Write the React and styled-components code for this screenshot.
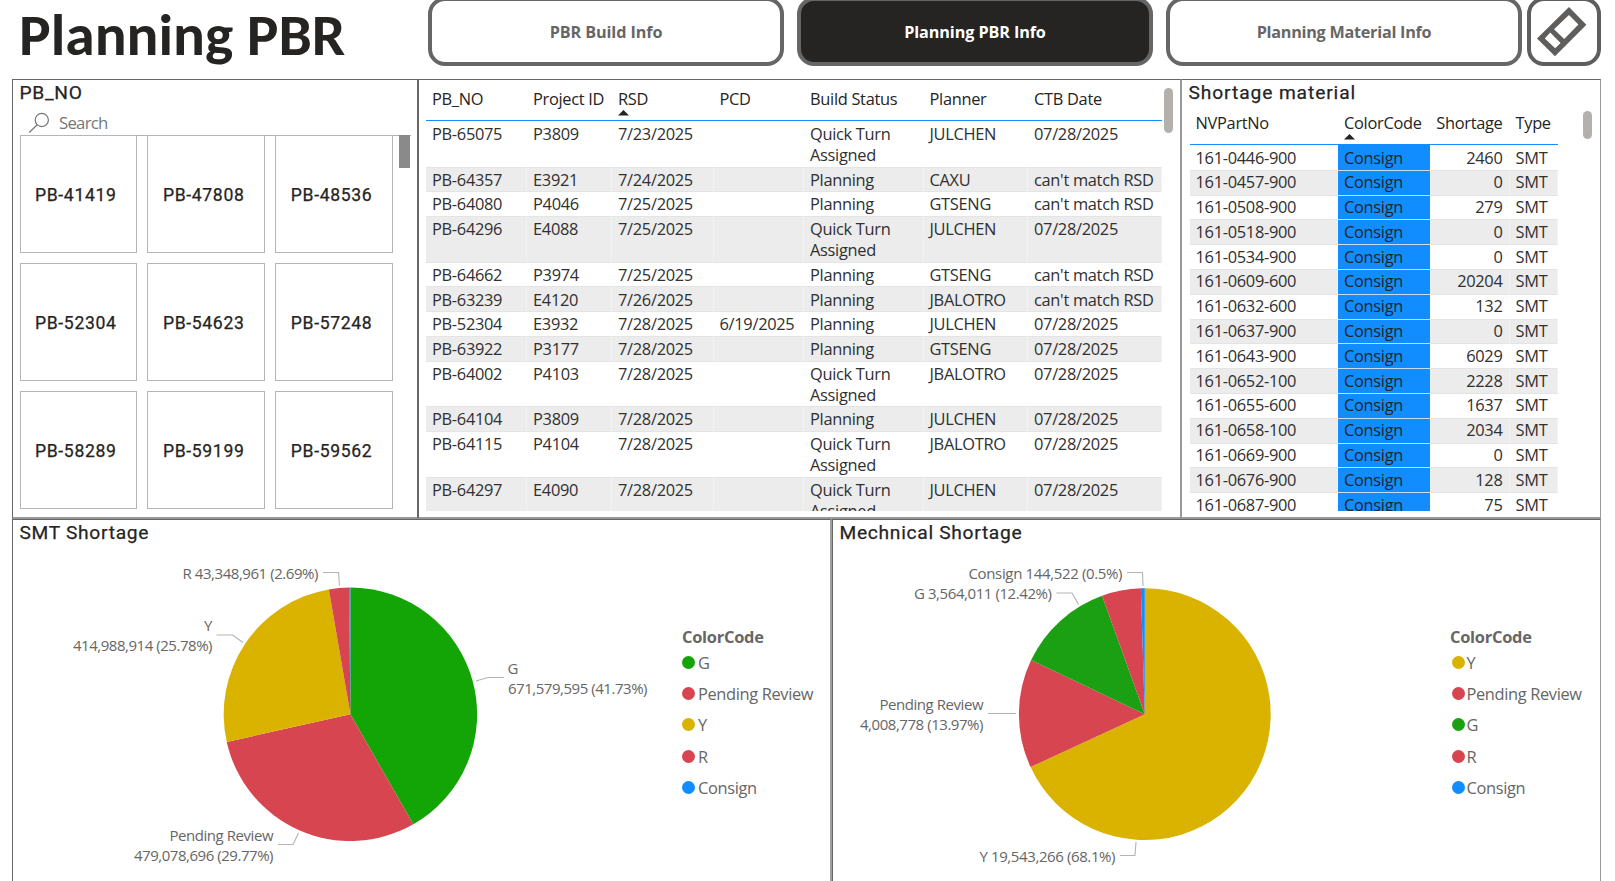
import React from "react";
import styled, { createGlobalStyle } from "styled-components";

const GlobalStyle = createGlobalStyle`
  *, *::before, *::after { box-sizing: border-box; }
  html, body { margin: 0; background: #fff; overflow: hidden; }
  body { font-family: "Open Sans", "Noto Sans", sans-serif; color: #252423; }
`;

const Page = styled.div`
  width: 1615px;
  height: 881px;
  padding-left: 12px;
  overflow: hidden;
  display: flex;
  flex-direction: column;
`;

const Header = styled.header`
  height: 79px;
  flex: none;
  display: flex;
  align-items: flex-start;
`;

const PageTitle = styled.h1`
  width: 416px;
  margin: 0;
  padding-left: 7px;
  font: bold 59.5px/70px Calibri, Carlito, Lato, sans-serif;
  white-space: nowrap;
`;

const NavButton = styled.button`
  width: ${(p) => p.$width || 356}px;
  height: 69px;
  margin: -3px ${(p) => p.$gap || 0}px 0 0;
  padding: 1px ${(p) => p.$padRight ?? 0}px 0 0;
  border: 4px solid ${(p) => (p.$icon ? "#605e5c" : "#666")};
  border-radius: 17px;
  background: ${(p) => (p.$active ? "#252423" : "#fff")};
  color: ${(p) => (p.$active ? "#fff" : "#666")};
  font: bold 16.2px "Open Sans", "Noto Sans", sans-serif;
  letter-spacing: ${(p) => p.$spacing || "-0.1px"};
  white-space: nowrap;
  display: flex;
  align-items: center;
  justify-content: center;
`;

const TopRow = styled.section`
  height: 440px;
  flex: none;
  display: grid;
  grid-template-columns: 406px 763px 420px;
`;

const BottomRow = styled.section`
  flex: 1;
  display: grid;
  grid-template-columns: 820px 769px;
`;

const Panel = styled.div`
  border-style: solid;
  border-color: ${(p) => p.$colors};
  border-width: ${(p) => p.$widths};
  min-width: 0;
  min-height: 0;
  overflow: hidden;
`;

const PanelTitle = styled.h2`
  margin: 0;
  height: 27px;
  padding-left: 6.5px;
  font: 400 19.2px/25px Roboto, sans-serif;
  letter-spacing: ${(p) => p.$spacing || "0.7px"};
  -webkit-text-stroke: 0.25px #252423;
  white-space: nowrap;
`;

const SearchBox = styled.div`
  width: 391px;
  height: 29px;
  margin-left: 7px;
  border-bottom: 1px solid #b3b0ad;
  display: flex;
  align-items: center;
  padding: 3px 0 0 8px;
  gap: 9px;
  color: #777;
  font-size: 16.8px;
  letter-spacing: -0.75px;
`;

const SlicerBody = styled.div`
  display: flex;
  margin: -1px 0 0 6.5px;
`;

const Tiles = styled.div`
  width: 373.5px;
  display: grid;
  grid-template-columns: repeat(3, 117.6px);
  grid-auto-rows: 117.7px;
  gap: 10.3px;
`;

const Tile = styled.div`
  border: 1px solid #b8b6b4;
  display: flex;
  align-items: center;
  justify-content: center;
  padding: 2px 5px 0 0;
  font: 400 17.6px Roboto, sans-serif;
  letter-spacing: 0.65px;
  -webkit-text-stroke: 0.25px #252423;
`;

const SquareThumb = styled.div`
  width: 11px;
  height: 33px;
  margin-left: 6px;
  background: #8a8a8a;
`;

const TableArea = styled.div`
  display: flex;
  align-items: flex-start;
  padding-left: ${(p) => p.$left}px;
  font-size: 16.4px;
  letter-spacing: -0.3px;
`;

const Table = styled.div`
  width: ${(p) => p.$width}px;
  height: ${(p) => p.$height}px;
  overflow: hidden;
`;

const HeadRow = styled.div`
  display: grid;
  grid-template-columns: ${(p) => p.$cols};
  height: ${(p) => p.$height}px;
  padding-top: ${(p) => p.$top}px;
  border-bottom: 1px solid #118dff;
  line-height: 21px;
  white-space: nowrap;
`;

const HeadCell = styled.div`
  padding: 0 7px 0 6px;
  text-align: ${(p) => (p.$right ? "right" : "left")};
  svg { display: block; margin-top: 1px; }
`;

const BodyRow = styled.div`
  display: grid;
  grid-template-columns: ${(p) => p.$cols};
  height: ${(p) => p.$height}px;
  background: ${(p) => (p.$shade ? "#ececec" : "#fff")};
  box-shadow: inset 0 1px 0 ${(p) => (p.$first ? "#fff" : "#e4e4e4")};
  line-height: 21px;
`;

const Cell = styled.div`
  padding: ${(p) => (p.$compact ? 1.5 : 2.2)}px 6px 0 6px;
  color: #303030;
  text-align: ${(p) => (p.$right ? "right" : "left")};
  border-right: 1px solid rgba(255, 255, 255, 0.35);
  ${(p) => p.$nowrap && "white-space: nowrap;"}
`;

const CodeCell = styled(Cell)`
  background: #118dff;
  color: #252423;
  border-right: 0;
  border-top: 1px solid ${(p) => (p.$first ? "#118dff" : "#c4dcf4")};
  padding-top: 0.5px;
`;

const RoundThumb = styled.div`
  width: 9px;
  height: ${(p) => p.$height}px;
  margin: ${(p) => p.$margin};
  border-radius: 5px;
  background: #b3b0ad;
`;

const ChartRow = styled.div`
  display: flex;
`;

const ChartSvg = styled.svg`
  display: block;
  flex: none;
  font: 15px "Open Sans", "Noto Sans", sans-serif;
`;

const Legend = styled.div`
  padding-top: 84px;
  color: #666;
  font-size: 16.4px;
  letter-spacing: -0.35px;
  white-space: nowrap;
`;

const LegendTitle = styled.div`
  height: 16.5px;
  line-height: 11px;
  letter-spacing: -0.25px;
  font-weight: bold;
`;

const LegendItem = styled.div`
  height: 31.35px;
  display: flex;
  align-items: center;
  gap: ${(p) => (p.$inset ? 2 : 3)}px;
  padding: 0 0 2px ${(p) => p.$inset || 0}px;
`;

const Dot = styled.span`
  width: 13px;
  height: 13px;
  border-radius: 50%;
  background: ${(p) => p.$color};
`;

const BLUE = "#118dff";
const RED = "#d64550";
const YELLOW = "#d9b300";
const GREEN = "#12a505";
const GREEN_ALT = "#1aa012";

const tiles = [
  "PB-41419", "PB-47808", "PB-48536",
  "PB-52304", "PB-54623", "PB-57248",
  "PB-58289", "PB-59199", "PB-59562",
];

const QUICK = "Quick Turn Assigned";
const builds = [
  ["PB-65075", "P3809", "7/23/2025", "", QUICK, "JULCHEN", "07/28/2025"],
  ["PB-64357", "E3921", "7/24/2025", "", "Planning", "CAXU", "can't match RSD"],
  ["PB-64080", "P4046", "7/25/2025", "", "Planning", "GTSENG", "can't match RSD"],
  ["PB-64296", "E4088", "7/25/2025", "", QUICK, "JULCHEN", "07/28/2025"],
  ["PB-64662", "P3974", "7/25/2025", "", "Planning", "GTSENG", "can't match RSD"],
  ["PB-63239", "E4120", "7/26/2025", "", "Planning", "JBALOTRO", "can't match RSD"],
  ["PB-52304", "E3932", "7/28/2025", "6/19/2025", "Planning", "JULCHEN", "07/28/2025"],
  ["PB-63922", "P3177", "7/28/2025", "", "Planning", "GTSENG", "07/28/2025"],
  ["PB-64002", "P4103", "7/28/2025", "", QUICK, "JBALOTRO", "07/28/2025"],
  ["PB-64104", "P3809", "7/28/2025", "", "Planning", "JULCHEN", "07/28/2025"],
  ["PB-64115", "P4104", "7/28/2025", "", QUICK, "JBALOTRO", "07/28/2025"],
  ["PB-64297", "E4090", "7/28/2025", "", QUICK, "JULCHEN", "07/28/2025"],
];

const materials = [
  ["161-0446-900", 2460], ["161-0457-900", 0], ["161-0508-900", 279],
  ["161-0518-900", 0], ["161-0534-900", 0], ["161-0609-600", 20204],
  ["161-0632-600", 132], ["161-0637-900", 0], ["161-0643-900", 6029],
  ["161-0652-100", 2228], ["161-0655-600", 1637], ["161-0658-100", 2034],
  ["161-0669-900", 0], ["161-0676-900", 128], ["161-0687-900", 75],
];

const BUILD_COLS = "101px 85px 101.5px 90.5px 119.5px 104.5px 133.5px";
const PART_COLS = "148.5px 92px 79.5px 48.5px";

const smt = {
  view: [13, 547, 669, 334],
  center: [350.4, 714.3],
  radius: 126.7,
  slices: [[0.4173, GREEN], [0.2977, RED], [0.2578, YELLOW], [0.0256, RED], [0.0016, BLUE]],
  labels: [
    ["R 43,348,961 (2.69%)", 182.5, 579, 136],
    ["Y", 204, 631, 8.5],
    ["414,988,914 (25.78%)", 73, 651, 139.5],
    ["Pending Review", 169.5, 841, 104],
    ["479,078,696 (29.77%)", 134, 861, 139.5],
    ["G", 507.5, 674, 11.5],
    ["671,579,595 (41.73%)", 508, 694, 139.5],
  ],
  leaders: [
    "323,572.5 338.5,572.5 339.5,585.5",
    "216.5,635 232.5,635 243,642.5",
    "278,844.5 293,844.5 298.5,833",
    "476,681 488,677.5 504,677.5",
  ],
};

const mech = {
  view: [833, 547, 617, 334],
  center: [1144.8, 714.2],
  radius: 125.9,
  slices: [[0.681, YELLOW], [0.1397, RED], [0.1242, GREEN_ALT], [0.0501, RED], [0.005, BLUE]],
  labels: [
    ["Consign 144,522 (0.5%)", 968.5, 579, 154],
    ["G 3,564,011 (12.42%)", 914, 599, 138],
    ["Pending Review", 879.5, 710, 104],
    ["4,008,778 (13.97%)", 860, 730, 123.5],
    ["Y 19,543,266 (68.1%)", 979.5, 862, 136],
  ],
  leaders: [
    "1127,572.5 1142.5,572.5 1143,586",
    "1056.5,593 1072,593 1078.5,604.5",
    "988,713.5 1016,713.5",
    "1120,855.5 1135,855.5 1136,842",
  ],
};

const smtLegend = [["G", GREEN], ["Pending Review", RED], ["Y", YELLOW], ["R", RED], ["Consign", BLUE]];
const mechLegend = [["Y", YELLOW], ["Pending Review", RED], ["G", GREEN_ALT], ["R", RED], ["Consign", BLUE]];

function slicePath([cx, cy], r, from, to) {
  const point = (t) => {
    const a = t * 2 * Math.PI;
    return `${(cx + r * Math.sin(a)).toFixed(2)} ${(cy - r * Math.cos(a)).toFixed(2)}`;
  };
  return `M${cx} ${cy}L${point(from)}A${r} ${r} 0 ${to - from > 0.5 ? 1 : 0} 1 ${point(to)}Z`;
}

function PieChart({ data }) {
  let start = 0;
  return (
    <ChartSvg width={data.view[2]} height={data.view[3]} viewBox={data.view.join(" ")}>
      {data.slices.map(([share, color], i) => {
        const d = slicePath(data.center, data.radius, start, start + share);
        start += share;
        return <path key={i} d={d} fill={color} />;
      })}
      {data.leaders.map((points) => (
        <polyline key={points} points={points} fill="none" stroke="#b3b3b3" strokeWidth="1.1" />
      ))}
      {data.labels.map(([text, x, y, length]) => (
        <text key={text} x={x} y={y} textLength={length} fill="#666">{text}</text>
      ))}
    </ChartSvg>
  );
}

function ColorLegend({ items, inset }) {
  return (
    <Legend>
      <LegendTitle>ColorCode</LegendTitle>
      {items.map(([name, color]) => (
        <LegendItem key={name} $inset={inset}>
          <Dot $color={color} />
          {name}
        </LegendItem>
      ))}
    </Legend>
  );
}

const SortArrow = () => (
  <svg width="11" height="6" viewBox="0 0 11 6">
    <path d="M5.5 0L11 5.6H0Z" fill="#252423" />
  </svg>
);

const SearchIcon = () => (
  <svg width="22" height="22" viewBox="0 0 22 22" fill="none" stroke="#777" strokeWidth="1.2">
    <circle cx="13.8" cy="8" r="6.6" />
    <path d="M9.2 12.8L1.2 20.5" />
  </svg>
);

const EraserIcon = () => (
  <svg width="50" height="50" viewBox="0 0 50 50" fill="#605e5c" fillRule="evenodd">
    <path d="M32 0L49.4 17.8L18 49.2L0 31.6ZM32 8L41.4 17.4L27.2 32L17 22.2ZM13.2 25.6L23.6 36L18.2 41.2L7.8 31.6Z" />
  </svg>
);

export default function App() {
  return (
    <Page>
      <GlobalStyle />
      <Header>
        <PageTitle>Planning PBR</PageTitle>
        <NavButton $gap={13}>PBR Build Info</NavButton>
        <NavButton $gap={13} $active $spacing="-0.1px">Planning PBR Info</NavButton>
        <NavButton $gap={5} $spacing="-0.25px">Planning Material Info</NavButton>
        <NavButton $width={74} $icon $padRight={5} aria-label="Clear filters">
          <EraserIcon />
        </NavButton>
      </Header>
      <TopRow>
        <Panel $widths="1px 1px 2px 1px" $colors="#666 #666 #999 #666">
          <PanelTitle>PB_NO</PanelTitle>
          <SearchBox>
            <SearchIcon />
            Search
          </SearchBox>
          <SlicerBody>
            <Tiles>
              {tiles.map((t) => <Tile key={t}>{t}</Tile>)}
            </Tiles>
            <SquareThumb />
          </SlicerBody>
        </Panel>
        <Panel $widths="1px 1px 2px 1px" $colors="#666 #999 #999 #666">
          <TableArea $left={7}>
            <Table $width={735.5} $height={431}>
              <HeadRow $cols={BUILD_COLS} $height={41} $top={8}>
                <HeadCell>PB_NO</HeadCell>
                <HeadCell>Project ID</HeadCell>
                <HeadCell>RSD<SortArrow /></HeadCell>
                <HeadCell>PCD</HeadCell>
                <HeadCell>Build Status</HeadCell>
                <HeadCell>Planner</HeadCell>
                <HeadCell>CTB Date</HeadCell>
              </HeadRow>
              {builds.map((row, i) => (
                <BodyRow
                  key={row[0]}
                  $cols={BUILD_COLS}
                  $height={row[4] === QUICK ? 45.5 : 24.8}
                  $shade={i % 2 === 1}
                  $first={i === 0}
                >
                  {row.map((v, c) => <Cell key={c} $nowrap={c !== 4}>{v}</Cell>)}
                </BodyRow>
              ))}
            </Table>
            <RoundThumb $height={45} $margin="8px 0 0 2px" />
          </TableArea>
        </Panel>
        <Panel $widths="1px 1px 2px 1px" $colors="#666 #999 #999 #999">
          <PanelTitle $spacing="0.9px">Shortage material</PanelTitle>
          <TableArea $left={7.5}>
            <Table $width={368.5} $height={404}>
              <HeadRow $cols={PART_COLS} $height={38} $top={5}>
                <HeadCell>NVPartNo</HeadCell>
                <HeadCell>ColorCode<SortArrow /></HeadCell>
                <HeadCell $right>Shortage</HeadCell>
                <HeadCell>Type</HeadCell>
              </HeadRow>
              {materials.map(([part, qty], i) => (
                <BodyRow key={part} $cols={PART_COLS} $height={24.8} $shade={i % 2 === 1} $first={i === 0}>
                  <Cell $compact>{part}</Cell>
                  <CodeCell $compact $first={i === 0}>Consign</CodeCell>
                  <Cell $compact $right>{qty}</Cell>
                  <Cell $compact>SMT</Cell>
                </BodyRow>
              ))}
            </Table>
            <RoundThumb $height={28} $margin="4px 0 0 24.5px" />
          </TableArea>
        </Panel>
      </TopRow>
      <BottomRow>
        <Panel $widths="1px 2px 0 1px" $colors="#666 #a0a0a0 #666 #666">
          <PanelTitle>SMT Shortage</PanelTitle>
          <ChartRow>
            <PieChart data={smt} />
            <ColorLegend items={smtLegend} />
          </ChartRow>
        </Panel>
        <Panel $widths="1px 1px 0 1px" $colors="#666 #999 #666 #666">
          <PanelTitle>Mechnical Shortage</PanelTitle>
          <ChartRow>
            <PieChart data={mech} />
            <ColorLegend items={mechLegend} inset={1.5} />
          </ChartRow>
        </Panel>
      </BottomRow>
    </Page>
  );
}
